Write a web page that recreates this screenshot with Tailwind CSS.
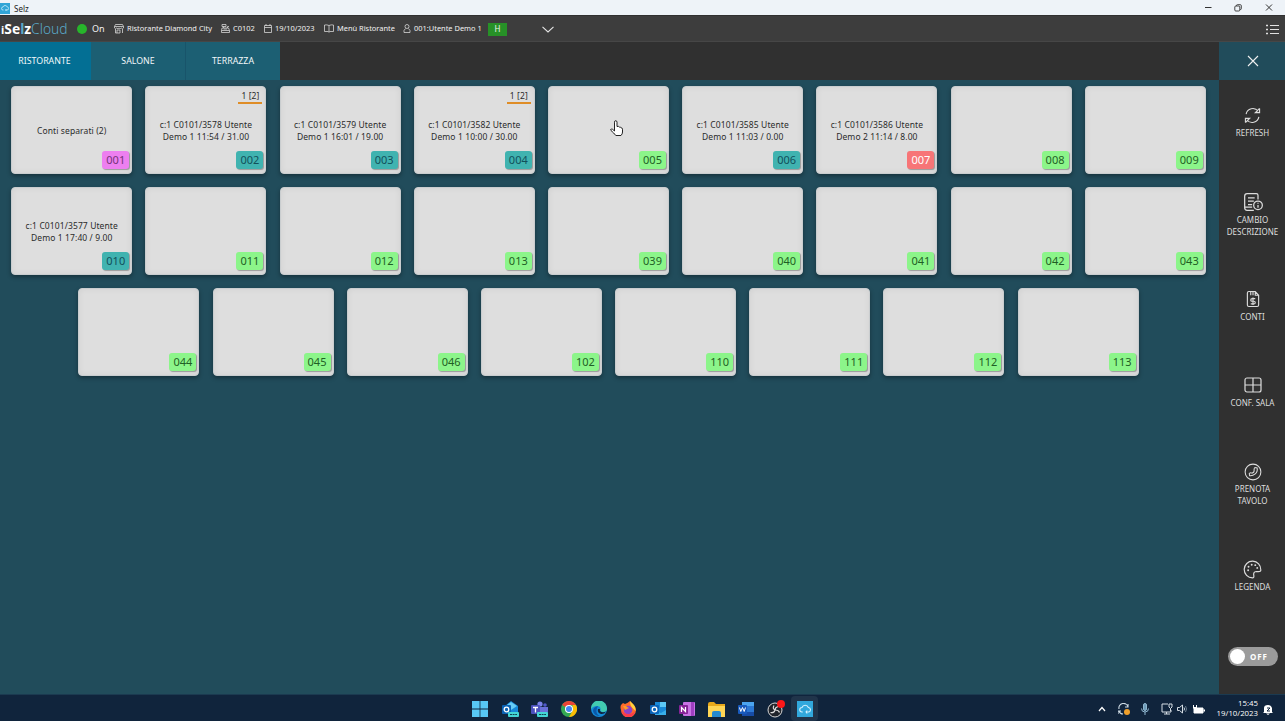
<!DOCTYPE html>
<html lang="it">
<head>
<meta charset="utf-8">
<title>Selz</title>
<script src="https://cdn.jsdelivr.net/npm/@tailwindcss/browser@4"></script>
</head>
<body class="w-[1285px] h-[721px] overflow-hidden flex flex-col bg-[#214c5b] font-['Noto_Sans','Open_Sans',sans-serif] relative">

<!-- Window title bar -->
<div class="h-[15px] shrink-0 bg-[#eef3f8] flex items-center text-[#222]">
  <div class="w-[10px] h-[11px] mt-px bg-[#31a5d6] flex items-center justify-center">
    <svg class="w-2 h-2" viewBox="0 0 16 16" fill="none" stroke="#c7edfb" stroke-width="1.6"><path d="M5 12H4a3 3 0 0 1 0-6 4.500 4.500 0 0 1 8.500 0A3 3 0 0 1 12 12H9M9 12l2-2M9 12l2 2"/></svg>
  </div>
  <span class="ml-1 pt-[2px] text-[8px] leading-none">Selz</span>
  <div class="ml-auto flex items-center w-[86px]">
    <svg class="w-[8px] h-[8px] ml-[5px]" viewBox="0 0 8 8" stroke="#333" fill="none"><path d="M1 3.500h6.500"/></svg>
    <svg class="w-[8px] h-[8px] ml-[22px]" viewBox="0 0 8 8" stroke="#333" stroke-width=".9" fill="none"><rect x=".8" y="2" width="5" height="5" rx="1"/><path d="M2.500 2V1.500a.8.800 0 0 1 .8-.8h3a1 1 0 0 1 1 1v3a.8.800 0 0 1-.8.800H6"/></svg>
    <svg class="w-[8px] h-[8px] ml-[23px]" viewBox="0 0 8 8" stroke="#333" fill="none"><path d="M1 .5l6 6M7 .5L1 6.500"/></svg>
  </div>
</div>

<!-- Application header -->
<header class="h-[27px] shrink-0 bg-[#3d3d3d] border-t border-[#303030] border-b border-b-[#464646] flex items-center pt-px text-[#f1f1f1] text-[7.450px] whitespace-nowrap">
  <div class="w-[75px] pl-[1px] text-[13.800px] leading-none flex items-baseline"><span class="font-bold text-[11px] text-white">i</span><span class="font-bold text-white">Se</span><span class="font-bold text-[#5aa9c9]">l</span><span class="font-bold text-white">z</span><span class="font-light text-[#5aa9c9]">Cloud</span></div>
  <div class="w-[39px] flex items-center pl-[2px]"><span class="w-[10px] h-[10px] rounded-full bg-[#27b52b]"></span><span class="ml-[5px] text-[9px]">On</span></div>
  <div class="w-[107px] flex items-center"><svg class="w-[10px] h-[10px] mr-[3px]" viewBox="0 0 20 20" fill="none" stroke="#ddd" stroke-width="1.500"><path d="M1 5L3 1h14l2 4H1v3q2 3 4.500 0 2.500 3 4.500 0 2.500 3 4.500 0 2.500 3 4.500 0V5M3 10v8h9v-6H6v6M17 10v8"/></svg>Ristorante Diamond City</div>
  <div class="w-[43px] flex items-center"><svg class="w-[9px] h-[9px] mr-[3px]" viewBox="0 0 18 18" fill="none" stroke="#ddd" stroke-width="1.500"><path d="M2 1h8v4H2zM5 5v3M2 8h13l2 5v4H1v-4zM1 13h16M5 10h7M13 8V5h3"/></svg>C0102</div>
  <div class="w-[60px] flex items-center"><svg class="w-[8px] h-[9px] mr-[3px]" viewBox="0 0 16 18" fill="none" stroke="#ddd" stroke-width="1.500"><path d="M1 3h14v14H1zM1 7h14M4 0v4M12 0v4"/></svg>19/10/2023</div>
  <div class="w-[79px] flex items-center"><svg class="w-[10px] h-[9px] mr-[3px]" viewBox="0 0 20 18" fill="none" stroke="#ddd" stroke-width="1.500"><path d="M10 3Q6 1 1 2v13h7l2 1.500 2-1.500h7V2q-5-1-9 1zM10 3v13"/></svg>Menù Ristorante</div>
  <div class="w-[85px] flex items-center"><svg class="w-[8px] h-[9px] mr-[3px]" viewBox="0 0 16 18" fill="none" stroke="#ddd" stroke-width="1.500"><circle cx="8" cy="5" r="4"/><path d="M5 9L2 13v4h12v-4l-3-4"/></svg>001:Utente Demo 1</div>
  <div class="w-[19px] h-[13px] bg-[#279127] flex items-center justify-center text-[8px]">H</div>
  <svg class="w-[12px] h-[7px] ml-[35px]" viewBox="0 0 12 7" fill="none" stroke="#e5e5e5" stroke-width="1.100"><path d="M.5.800L6 6l5.500-5.200"/></svg>
  <svg class="w-[13px] h-[11px] ml-auto mr-[6px]" viewBox="0 0 13 11" fill="none" stroke="#e0e0e0"><path d="M0 1.500h2M0 5.500h2M0 9.500h2" stroke-width="1.500"/><path d="M4 1.500h9M4 5.500h9M4 9.500h9"/></svg>
</header>

<div class="flex h-[652px] shrink-0">
  <div class="w-[1219px] flex flex-col">
    <nav class="h-[38px] bg-[#303030] flex text-[#f2f8fa] text-[8.800px]">
      <div class="w-[91px] bg-[#036f94] flex items-center justify-center pr-[2px] pt-px">RISTORANTE</div>
      <div class="w-[95px] bg-[#1c5f73] border-r border-[#18546a] flex items-center justify-center pt-px">SALONE</div>
      <div class="w-[94px] bg-[#1c5f73] flex items-center justify-center pt-px">TERRAZZA</div>
    </nav>
    <main id="tables" class="flex flex-col gap-[13px] pt-[6px] pr-[2px]"></main>
  </div>

  <!-- Action sidebar -->
  <aside class="w-[66px] h-[652px] bg-[#303030] flex flex-col text-[#dedede] text-[8px] leading-[12px] text-center pl-px">
    <div class="h-[38px] -ml-px pl-px bg-[#214c5b] flex items-center justify-center"><svg class="w-[12px] h-[12px]" viewBox="0 0 12 12" stroke="#f0f0f0" stroke-width="1.100"><path d="M1 1l10 10M11 1L1 11"/></svg></div>
    <div class="h-[86px] flex flex-col items-center pt-[27px]"><svg class="w-[17px] h-[17px] mb-[3px]" viewBox="0 0 24 24" fill="none" stroke="#dcdcdc" stroke-width="1.600"><path d="M3 10A9.500 9.500 0 0 1 20 6M22 2v6h-6l6-6M21 14A9.500 9.500 0 0 1 4 18M2 22v-6h6l-6 6"/></svg>REFRESH</div>
    <div class="h-[97px] flex flex-col items-center pt-[26px]"><svg class="w-[20px] h-[20px] mb-[2px]" viewBox="0 0 24 24" fill="none" stroke="#dcdcdc" stroke-width="1.500"><path d="M18 9V4q0-2-2-2H5Q2 2 2 5v14q0 3 3 3h8M6 7h8M6 11h7M6 15h5M2 18h9"/><circle cx="18" cy="16" r="5.200"/><path d="M18 15.500v3.500M18 12.800v1.200"/></svg>CAMBIO<br>DESCRIZIONE</div>
    <div class="h-[87px] flex flex-col items-center pt-[27px]"><svg class="w-[14px] h-[18px] mb-[3px]" viewBox="0 0 18 24" fill="none" stroke="#dcdcdc" stroke-width="1.500"><path d="M3.500 2H12l4.500 5v13q0 2-2 2h-11q-2 0-2-2V4q0-2 2-2zM12 2v5h4.500M6 2v5M9 2v5"/><path d="M12 11.500H8q-2 0-2 1.800T8 15h2q2 0 2 1.800t-2 1.700H6M9 10v10"/></svg>CONTI</div>
    <div class="h-[86px] flex flex-col items-center pt-[27px]"><svg class="w-[18px] h-[16px] mb-[4px]" viewBox="0 0 18 16" fill="none" stroke="#dcdcdc" stroke-width="1.200"><rect x="1" y="1" width="16" height="14" rx="2"/><path d="M9 1v14M1 8h16"/></svg>CONF. SALA</div>
    <div class="h-[98px] flex flex-col items-center pt-[27px]"><svg class="w-[18px] h-[18px] mb-[3px]" viewBox="0 0 24 24" fill="none" stroke="#dcdcdc" stroke-width="1.400"><circle cx="12" cy="12" r="10.500"/><path d="M14.500 6l3 .5q1 5-2.500 8t-7.500 2.500l-.5-3q1.500-1.500 3.500-.5 3-.5 3-3.500-.500-2.500 1-4z"/></svg><span class="-mt-px">PRENOTA<br>TAVOLO</span></div>
    <div class="h-[92px] flex flex-col items-center pt-[26px]"><svg class="w-[19px] h-[19px] mb-[2px]" viewBox="0 0 24 24" fill="none" stroke="#dcdcdc" stroke-width="1.500"><path d="M22.500 12.500A10.500 10.500 0 1 0 12 22.500q2 0 1.700-2.500-1.200-5 3-5.500 4 .5 5-.2.800-.8.800-1.800z"/><g fill="#dcdcdc" stroke="none"><circle cx="6.500" cy="13" r="1.200"/><circle cx="7" cy="8.500" r="1.200"/><circle cx="11" cy="6" r="1.200"/><circle cx="15.500" cy="6.500" r="1.200"/><circle cx="18" cy="10" r="1.200"/></g></svg>LEGENDA</div>
    <div class="mt-[21px] ml-[8px] w-[50px] h-[19px] rounded-full bg-[#9b9b9b] flex items-center pl-[2px] text-white"><span class="w-[15px] h-[15px] rounded-full bg-white"></span><span class="ml-[5px] text-[8px] font-bold tracking-[0.9px]">OFF</span></div>
  </aside>
</div>

<!-- Taskbar -->
<footer class="h-[27px] shrink-0 bg-[#10243c] border-t border-[#1b3a50] flex items-center text-white font-['Open_Sans','Noto_Sans',sans-serif]">
  <div class="ml-[465px] flex items-center pt-[2px]">
    <div class="w-[30px] flex justify-center"><svg class="w-4 h-4" viewBox="0 0 16 16" fill="#58c8f5"><path d="M0 0h7.600v7.600H0zM8.400 0H16v7.600H8.400zM0 8.400h7.600V16H0zM8.400 8.400H16V16H8.400z"/></svg></div>
    <div class="w-[30px] flex justify-center"><svg class="w-[17px] h-[16px]" viewBox="0 0 17 16"><path d="M3 5l6-5 7 5v8H3z" fill="#1688d8"/><path d="M5 4l4-3 6 4-6 4z" fill="#66ccf6"/><rect y="4" width="9" height="9" rx="1" fill="#0b62b4"/><circle cx="4.500" cy="8.500" r="2.300" fill="none" stroke="#fff" stroke-width="1.300"/><rect x="6" y="11" width="11" height="5" rx="1" fill="#43d5d4"/><path d="M8 13.500h7" stroke="#10444f" stroke-dasharray="2 .6"/></svg></div>
    <div class="w-[29px] flex justify-center"><svg class="w-[17px] h-[16px]" viewBox="0 0 17 16"><circle cx="9" cy="3" r="2.600" fill="#7b83eb"/><circle cx="14" cy="4" r="1.800" fill="#5059c9"/><path d="M6 6h11v4q0 4-4 4H6z" fill="#6970d8"/><rect y="4" width="9" height="9" rx="1" fill="#4b50bd"/><path d="M2 6.500h5M4.500 6.500v5" stroke="#fff" stroke-width="1.300"/><rect x="6" y="11" width="11" height="5" rx="1" fill="#43d5d4"/><path d="M8 13.500h7" stroke="#10444f" stroke-dasharray="2 .6"/></svg></div>
    <div class="w-[30px] flex justify-center"><svg class="w-4 h-4" viewBox="0 0 16 16"><circle cx="8" cy="8" r="8" fill="#34a853"/><path d="M8 8L1.100 4A8 8 0 0 1 15 4H8z" fill="#ea4335"/><path d="M15 4a8 8 0 0 1-7 12l3.500-6V4z" fill="#fbbc05"/><circle cx="8" cy="8" r="4" fill="#fff"/><circle cx="8" cy="8" r="3" fill="#4285f4"/></svg></div>
    <div class="w-[29px] flex justify-center"><svg class="w-4 h-4" viewBox="0 0 16 16"><circle cx="8" cy="8" r="8" fill="#148ad8"/><path d="M0 7a8 8 0 0 1 16 1q0 3-4 3-3 0-2.500-2Q10 5 6 5 2 5 0 8z" fill="#42cbb0"/><path d="M6 7q-2 6 3 8-6 0-7-5 0-4 5-5z" fill="#0b58a8"/><path d="M9 8q-1 3 3 3.300 2 0 3-.8-2 3-5 2.500Q6 12 7 8z" fill="#10243c"/></svg></div>
    <div class="w-[30px] flex justify-center"><svg class="w-4 h-4" viewBox="0 0 16 16"><path d="M1 4l2-2 2 1q3-1 5-3l3 3q3 3 3 6a7.500 7.500 0 0 1-15 0Q0 6 1 4z" fill="#ff6a2b"/><path d="M10 0l3 3q3 3 2.500 7l-3-3Q10 5 10 0z" fill="#ffd23d"/><circle cx="8" cy="9" r="4.300" fill="#8c43c8"/><path d="M1 7q1 6 8 6 4 0 6-3-1 6-7 6T1 7z" fill="#fb394d"/><path d="M3 5q3-1 4 1l2 1-4 2z" fill="#ff9b28"/></svg></div>
    <div class="w-[29px] flex justify-center"><svg class="w-4 h-4" viewBox="0 0 16 16"><path d="M5 1h11v13H5z" fill="#1889d7"/><path d="M10 1h6v5h-6z" fill="#5cc8f6"/><path d="M5 10l6 2 5-3v5H5z" fill="#38afea"/><rect y="4" width="9" height="9" rx="1" fill="#0b65ba"/><circle cx="4.500" cy="8.500" r="2.300" fill="none" stroke="#fff" stroke-width="1.300"/></svg></div>
    <div class="w-[30px] flex justify-center"><svg class="w-4 h-4" viewBox="0 0 16 16"><rect x="4" y="1" width="12" height="14" rx="1" fill="#c873e4"/><path d="M12 1h3v14h-3z" fill="#9f3fc1"/><rect y="4" width="9" height="9" rx="1" fill="#852397"/><path d="M2.500 11V6.500l4 4V6" fill="none" stroke="#fff" stroke-width="1.200"/></svg></div>
    <div class="w-[29px] flex justify-center"><svg class="w-[17px] h-[15px]" viewBox="0 0 17 15"><path d="M0 2q0-2 2-2h4l2 2h9v13H0z" fill="#e9a91b"/><path d="M0 4h17v11H0z" fill="#ffd655"/><path d="M4 15v-4q0-2 2-2h5q2 0 2 2v4z" fill="#258ad0"/></svg></div>
    <div class="w-[30px] flex justify-center"><svg class="w-4 h-4" viewBox="0 0 16 16"><path d="M4 1h12v14H4z" fill="#2c78d4"/><path d="M4 1h12v4H4z" fill="#4ba4ef"/><path d="M4 11h12v4H4z" fill="#174ca6"/><rect y="4" width="9" height="9" rx="1" fill="#185abd"/><path d="M1.500 6.500l1.300 4 1.700-4 1.700 4 1.300-4" fill="none" stroke="#fff"/></svg></div>
    <div class="w-[30px] flex justify-center"><svg class="w-[18px] h-[18px]" viewBox="0 0 18 18"><circle cx="8" cy="10" r="7" fill="#20242b" stroke="#d8d8d8"/><path d="M7 5.500q-2 3.500 1.500 4.500 3 0 4 2.500M3.500 12.500q3.500 1 4.500-2.500 0-2.500 3-3.500" fill="none" stroke="#ddd" stroke-width="1.200"/><circle cx="14" cy="4" r="4" fill="#fa1719"/></svg></div>
    <div class="w-[27px] h-[25px] -mt-[2px] bg-[#20344a] rounded-sm flex items-center justify-center"><span class="w-4 h-4 mt-[2px] bg-[#31a8dc] flex items-center justify-center"><svg class="w-3 h-3" viewBox="0 0 16 16" fill="none" stroke="#d5f2ff" stroke-width="1.400"><path d="M5 12H4a3 3 0 0 1 0-6 4.500 4.500 0 0 1 8.500 0A3 3 0 0 1 12 12H9M9 12l2-2M9 12l2 2"/></svg></span></div>
  </div>
  <div class="ml-auto flex items-center pt-[2px] w-[187px]">
    <svg class="w-[8px] h-[6px] shrink-0" viewBox="0 0 8 6" fill="none" stroke="#fff" stroke-width="1.200"><path d="M1 5l3-3.500L7 5"/></svg>
    <svg class="w-[13px] h-[13px] ml-[12px] shrink-0" viewBox="0 0 13 13" fill="none" stroke="#ccd9e2" stroke-width="1.100"><path d="M1 6a4.500 4.500 0 0 1 9-2M10 1v3H7M5 11Q2 11 1 8M0 11V8h3"/><circle cx="9" cy="9" r="3" fill="#f0a02b" stroke="none"/></svg>
    <svg class="w-[8px] h-[12px] ml-[10px] shrink-0" viewBox="0 0 8 12" fill="none" stroke="#8fb6cf"><rect x="2.500" y=".5" width="3" height="7" rx="1.500" fill="#6d9bb8"/><path d="M.5 5.500Q.5 9 4 9t3.500-3.500M4 9v3"/></svg>
    <svg class="w-[12px] h-[12px] ml-[12px] shrink-0" viewBox="0 0 12 12" fill="none" stroke="#d5dde4"><path d="M7 1H1v8h9V7M3 11h6M5.500 9v2M8 1h3v3L9.500 5.500 8 4zM9.500 5.500V8"/></svg>
    <svg class="w-[11px] h-[10px] ml-[4px] shrink-0" viewBox="0 0 11 10" fill="none" stroke="#d5dde4"><path d="M.5 3.500h2L5.500 1v8L2.500 6.500h-2zM7 3.500q1 1.500 0 3"/><path d="M8.500 2q2 3 0 6" stroke="#6b7d8e"/></svg>
    <svg class="w-[12px] h-[9px] ml-[5px] shrink-0" viewBox="0 0 12 9"><path d="M1 3h9v5H1z" fill="#fff" stroke="#fff"/><path d="M10.500 4.500H12v2h-1.500zM0 0h1v2h2V0h1v3L2 5 0 3z" fill="#fff"/></svg>
    <div class="ml-[6px] -mt-[2px] w-[47px] shrink-0 text-[7.800px] leading-[10.500px] whitespace-nowrap flex flex-col items-end"><span>15:45</span><span>19/10/2023</span></div>
    <svg class="w-[10px] h-[11px] ml-[5px] shrink-0" viewBox="0 0 10 11"><path d="M1 8V4q0-3 4-3 3 0 4 3v4l1 1H0zM3 9.500h4L5 11z" fill="#fff"/><path d="M4 4h3L4 7h3" stroke="#10243c" fill="none"/></svg>
  </div>
</footer>

<!-- Mouse pointer -->
<svg class="absolute left-[610px] top-[120px] w-[13px] h-[17px]" viewBox="0 0 13 17" fill="#fff" stroke="#222" stroke-width="1" stroke-linejoin="round"><path d="M4.500 10V2.200q0-1.500 1.200-1.500T7 2.200v4.300q2-.5 2.400.6 1.500-.3 1.800.8 1.300 0 1.300 1.300V12q0 2-1.500 3.500H5.800Q4 13 1 10.500q-.8-1 .2-1.500t3.300 2z"/></svg>

<script>
  const free = "bg-[#8cf58a] text-[#1f5f25]";
  const busy = "bg-[#40b3b0] text-[#12505b]";
  const split = "bg-[#ed7ff0] text-[#743478]";
  const alarm = "bg-[#f77577] text-white";
  const rows = [
    [["001", split, "Conti separati (2)"],
     ["002", busy, "c:1 C0101/3578 Utente<br>Demo 1 11:54 / 31.00", "1 [2]"],
     ["003", busy, "c:1 C0101/3579 Utente<br>Demo 1 16:01 / 19.00"],
     ["004", busy, "c:1 C0101/3582 Utente<br>Demo 1 10:00 / 30.00", "1 [2]"],
     ["005", free],
     ["006", busy, "c:1 C0101/3585 Utente<br>Demo 1 11:03 / 0.00"],
     ["007", alarm, "c:1 C0101/3586 Utente<br>Demo 2 11:14 / 8.00"],
     ["008", free], ["009", free]],
    [["010", busy, "c:1 C0101/3577 Utente<br>Demo 1 17:40 / 9.00"],
     ["011", free], ["012", free], ["013", free], ["039", free], ["040", free], ["041", free], ["042", free], ["043", free]],
    [["044", free], ["045", free], ["046", free], ["102", free], ["110", free], ["111", free], ["112", free], ["113", free]]
  ];
  document.getElementById("tables").innerHTML = rows.map(row =>
    `<div class="flex justify-center gap-[13.200px]">` + row.map(([n, color, text, guests]) =>
      `<div class="relative w-[121px] h-[88px] rounded-[4px] bg-[#dedede] border border-[#c9cdcf] shadow-[0_2px_4px_rgba(0,0,0,0.35),inset_0_0_6px_rgba(0,0,0,0.06)] flex items-center justify-center text-center text-[8.500px] tracking-[0.1px] leading-[12px] text-[#2b2b2b] whitespace-nowrap">
        <span class="pt-px">${text || ""}</span>
        ${guests ? `<span class="absolute right-[3px] top-[3px] w-[24px] h-[14px] border-b-2 border-[#df8d27] leading-[12px]">${guests}</span>` : ""}
        <span class="absolute right-[2px] bottom-[4px] w-[27px] h-[18px] rounded-[3px] shadow-[1px_1px_1px_rgba(0,0,0,0.3)] text-[11px] leading-[18px] tracking-normal ${color}">${n}</span>
      </div>`).join("") + `</div>`).join("");
</script>
</body>
</html>
